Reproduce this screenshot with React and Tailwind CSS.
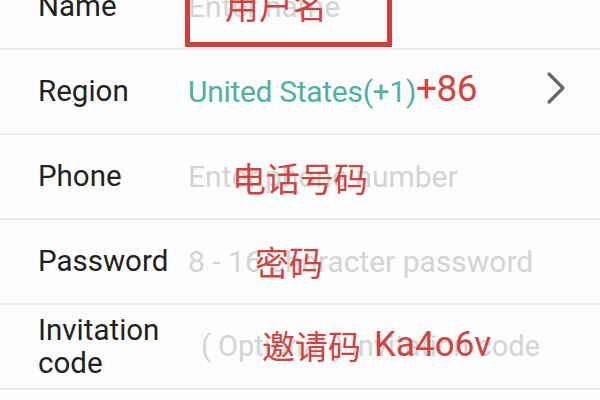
export default function App() {
  const cjk = 'font-["Noto_Sans_CJK_SC",_"Noto_Sans",_sans-serif]';
  return (
    <div className="w-[600px] h-[400px] overflow-hidden bg-[#fdfdfd] font-[Roboto,_'Noto_Sans',_'Noto_Sans_CJK_SC',_sans-serif]">
      <div className="mt-[-35px]">
        {/* Name */}
        <div className="relative h-[85px] flex items-center border-b-2 border-[#ededed]">
          <div className="w-[188px] pl-[38px] text-[29.5px] text-[#222]">Name</div>
          <div className="text-[30px] text-[#d4d4d4]">Enter name</div>
          <div className="absolute left-[185px] top-0 w-[207px] h-[82px] border-[5px] border-[#d83c38]" />
          <div className={`absolute left-[225px] top-[20px] text-[34px] leading-[40px] text-[#d2433f] ${cjk}`}>用户名</div>
        </div>
        {/* Region */}
        <div className="relative h-[85px] flex items-center border-b-2 border-[#ededed]">
          <div className="w-[188px] pl-[38px] text-[29.5px] text-[#222]">Region</div>
          <div className="text-[30px] tracking-[-0.3px] text-[#4eb1a7]">United States(+1)</div>
          <div className="absolute left-[416px] top-[17px] text-[37px] leading-[44px] tracking-[-0.5px] text-[#d6433f]">+86</div>
          <svg className="absolute left-[543px] top-[21px]" width="26" height="34" viewBox="0 0 26 34">
            <path d="M6 3 L20 17 L6 31" fill="none" stroke="#666" strokeWidth="3.2" strokeLinecap="round" strokeLinejoin="round" />
          </svg>
        </div>
        {/* Phone */}
        <div className="relative h-[85px] flex items-center border-b-2 border-[#ededed]">
          <div className="w-[188px] pl-[38px] text-[29.5px] text-[#222]">Phone</div>
          <div className="text-[30px] text-[#d4d4d4]">Enter phone number</div>
          <div className={`absolute left-[232px] top-[22px] text-[34px] leading-[42px] text-[#d2433f] ${cjk}`}>电话号码</div>
        </div>
        {/* Password */}
        <div className="relative h-[85px] flex items-center border-b-2 border-[#ededed]">
          <div className="w-[188px] pl-[38px] text-[29.5px] text-[#222]">Password</div>
          <div className="text-[30px] text-[#d4d4d4]">8 - 16 character password</div>
          <div className={`absolute left-[255px] top-[21px] text-[34px] leading-[42px] text-[#d2433f] ${cjk}`}>密码</div>
        </div>
        {/* Invitation */}
        <div className="relative h-[85px] flex items-center border-b-2 border-[#ededed]">
          <div className="w-[188px] pl-[38px] text-[29.5px] leading-[33px] text-[#222]">Invitation<br />code</div>
          <div className="ml-[13px] text-[29px] text-[#d4d4d4]">( Optional ) invitation code</div>
          <div className={`absolute left-[262px] top-[18px] flex items-center text-[33px] leading-[44px] text-[#d2433f] ${cjk}`}>
            <span>邀请码</span>
            <span className="ml-[13px] font-[Roboto,_sans-serif] text-[35px]">Ka4o6v</span>
          </div>
        </div>
        <div className="h-[40px]" />
      </div>
    </div>
  );
}
